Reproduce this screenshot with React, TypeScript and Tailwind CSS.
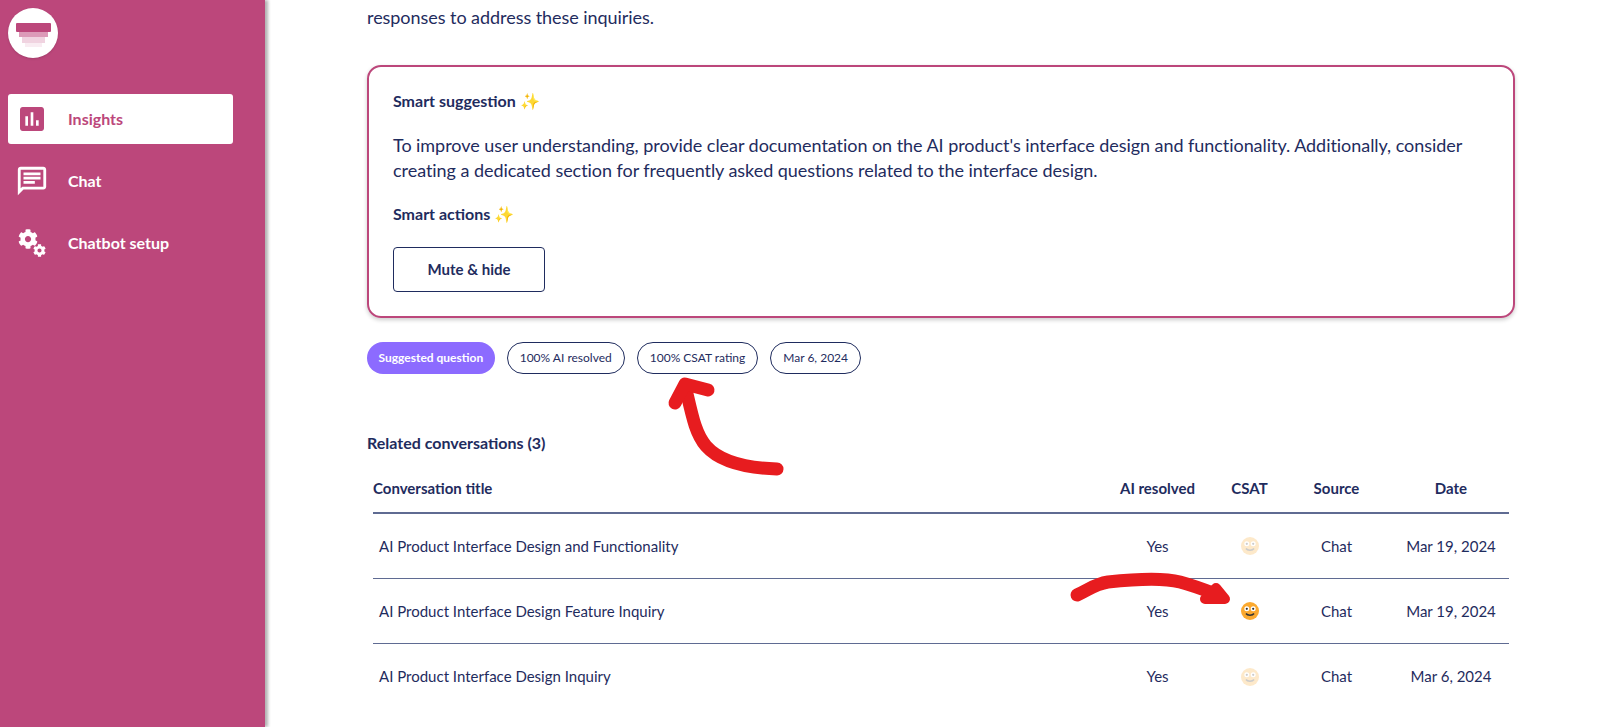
import { FaCog } from 'react-icons/fa';
import React from 'react';

const rows = [
  { title: 'AI Product Interface Design and Functionality', active: false, date: 'Mar 19, 2024' },
  { title: 'AI Product Interface Design Feature Inquiry', active: true, date: 'Mar 19, 2024' },
  { title: 'AI Product Interface Design Inquiry', active: false, date: 'Mar 6, 2024' },
];

const Logo = () => (
  <div className="flex h-[50px] w-[50px] items-center justify-center rounded-full bg-white shadow">
    <svg width="35" height="24" viewBox="0 0 35 24" className="mt-[4px]">
      <rect x="0" y="0" width="35" height="9" rx="1" fill="#bc477b" />
      <rect x="3" y="9" width="29" height="5" fill="#dc9ab8" />
      <rect x="6" y="14" width="23" height="6" fill="#f0d3e0" />
      <rect x="9" y="20" width="17" height="4" fill="#f9ecf2" />
    </svg>
  </div>
);

const Smiley = ({ active }: { active: boolean }) => (
  <svg width="18" height="18" viewBox="0 0 18 18" className={active ? '' : 'opacity-25'}>
    <circle cx="9" cy="9" r="9" fill="#fba92f" />
    <circle cx="5.8" cy="6.8" r="2.5" fill="#fff" />
    <circle cx="12.2" cy="6.8" r="2.5" fill="#fff" />
    <circle cx="5.8" cy="6.8" r="1.1" fill="#333" />
    <circle cx="12.2" cy="6.8" r="1.1" fill="#333" />
    <path d="M5 11.5c1.5 2.4 6.5 2.4 8 0" fill="none" stroke="#333" strokeWidth="1.5" />
  </svg>
);

const Chip = ({ children }: { children: React.ReactNode }) => (
  <span className="flex h-8 items-center rounded-full border border-[#1f2c5e] px-[12px] text-xs text-[#1f2c5e]">
    {children}
  </span>
);

const grid = 'grid grid-cols-[1fr_123px_61px_113px_116px] items-center text-center';

export default function App() {
  return (
    <div className="relative flex h-[727px] overflow-hidden bg-white font-['Lato',sans-serif] text-[#1f2c5e]">
      <aside className="w-[265px] shrink-0 bg-[#bc477b] px-2 pt-2 shadow-[3px_0_3px_rgba(0,0,0,0.3)]">
        <Logo />
        <nav className="mt-[36px] flex w-[225px] flex-col gap-[12px] text-[16px] font-bold text-white">
          <a className="flex h-[50px] items-center gap-[20px] rounded-[3px] bg-white pl-[8px] text-[#bc477b]">
            <svg width="32" height="32" viewBox="0 0 24 24" fill="#bc477b">
              <path d="M19 3H5c-1.1 0-2 .9-2 2v14c0 1.1.9 2 2 2h14c1.1 0 2-.9 2-2V5c0-1.1-.9-2-2-2zM9 17H7v-7h2v7zm4 0h-2V7h2v10zm4 0h-2v-4h2v4z" />
            </svg>
            Insights
          </a>
          <a className="flex h-[50px] items-center gap-[19px] pl-[7px]">
            <svg width="34" height="34" viewBox="0 0 24 24" fill="#fff">
              <path d="M4 4h16v12H5.17L4 17.17V4m0-2c-1.1 0-1.99.9-1.99 2L2 22l4-4h14c1.1 0 2-.9 2-2V4c0-1.1-.9-2-2-2H4zm2 10h8v2H6v-2zm0-3h12v2H6V9zm0-3h12v2H6V6z" />
            </svg>
            Chat
          </a>
          <a className="flex h-[50px] items-center gap-[22px] pl-[10px]">
            <span className="relative h-[28px] w-[28px]">
              <FaCog size={20} color="#fff" className="absolute left-0 top-0" />
              <FaCog size={13} color="#fff" className="absolute bottom-0 right-0" />
            </span>
            Chatbot setup
          </a>
        </nav>
      </aside>

      <main className="min-w-0 flex-1 pl-[102px] pr-[107px]">
        {/* page is scrolled: only the descenders of the line above show at the top edge */}
        <p className="-mt-[23px] text-[18px] leading-[25px] tracking-[-0.05px]">
          <span className="mb-[3px] block whitespace-nowrap">Users frequently ask about the AI product's interface design and how it works, so we recommend that you review these chats and prepare clear</span>
          responses to address these inquiries.
        </p>
        <section className="mt-[35px] h-[253px] rounded-[14px] border-2 border-[#bc477b] px-[24px] pt-[24px] shadow-[0_2px_4px_rgba(0,0,0,0.2)]">
          <h3 className="text-[16px] font-bold leading-[20px]">Smart suggestion ✨</h3>
          <p className="mt-[22px] text-[18px] leading-[25px] tracking-[-0.05px]">
            To improve user understanding, provide clear documentation on the AI product's interface design and functionality. Additionally, consider creating a dedicated section for frequently asked questions related to the interface design.
          </p>
          <h3 className="mt-[21px] text-[16px] font-bold leading-[20px]">Smart actions ✨</h3>
          <button className="mt-[23px] h-[45px] w-[152px] rounded-[4px] border border-[#1f2c5e] text-[15px] font-bold">Mute &amp; hide</button>
        </section>
        <div className="mt-[24px] flex gap-[12px]">
          <span className="flex h-8 items-center rounded-full bg-[#8c6bff] px-[11.5px] text-xs font-bold text-white">Suggested question</span>
          <Chip>100% AI resolved</Chip>
          <Chip>100% CSAT rating</Chip>
          <Chip>Mar 6, 2024</Chip>
        </div>
        <h3 className="mt-[59px] text-[16px] font-bold leading-[20px]">Related conversations (3)</h3>
        <div className="mx-[6px] mt-[22px] text-[15px]">
          <div className={`${grid} h-[39px] border-b-2 border-[#5f6b92] pb-[11px] font-bold`}>
            <span className="text-left">Conversation title</span>
            <span>AI resolved</span>
            <span>CSAT</span>
            <span>Source</span>
            <span>Date</span>
          </div>
          {rows.map((row) => (
            <div key={row.title} className={`${grid} h-[65px] border-b border-[#5f6b92] last:border-b-0`}>
              <span className="pl-[6px] text-left">{row.title}</span>
              <span>Yes</span>
              <span className="flex justify-center"><Smiley active={row.active} /></span>
              <span>Chat</span>
              <span>{row.date}</span>
            </div>
          ))}
        </div>
      </main>

      {/* red marker scribbles on top of the screenshot */}
      <svg className="pointer-events-none absolute left-0 top-0" width="1622" height="727">
        <g fill="none" stroke="#e71c1f" strokeLinecap="round" strokeLinejoin="round">
          <path d="M777 469C745 468 720 462 706 446C695 433 692 415 685 385" strokeWidth="13" />
          <path d="M675 403L685 384L708 390" strokeWidth="13" />
          <path d="M1077 595C1090 589 1095 584 1108 582C1135 579 1165 578 1180 582C1195 586 1205 590 1218 595" strokeWidth="13" />
          <path d="M1205 599L1216 588L1225 599Z" strokeWidth="10" fill="#e71c1f" />
        </g>
      </svg>
    </div>
  );
}
